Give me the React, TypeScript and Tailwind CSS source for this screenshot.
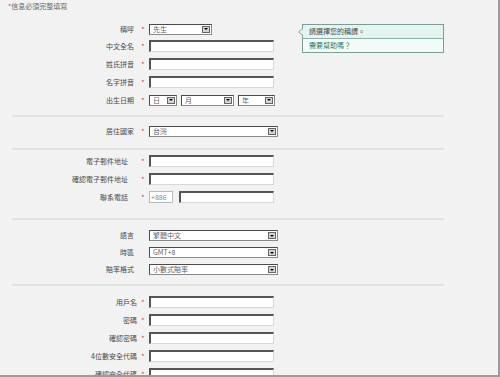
import React from 'react';

const font = { fontFamily: '"Noto Sans CJK TC", "Noto Sans", sans-serif' };

const Input: React.FC<{ w?: string }> = ({ w = 'w-[125px]' }) => (
  <div className={`${w} h-[12px] bg-white border-t-2 border-l-2 border-t-[#555] border-l-[#555] border-b border-r border-b-[#d8d8d8] border-r-[#d8d8d8]`} />
);

const Select: React.FC<{ value: string; w: string }> = ({ value, w }) => (
  <div className={`${w} h-[11px] bg-white border border-[#8a8a8a] border-t-[#4a4a4a] border-l-[#4a4a4a] flex items-center justify-between pl-[3px] pr-[1px]`}>
    <span className="text-[7px] leading-none text-[#666]">{value}</span>
    <div className="w-[8px] h-[7px] bg-[#d4d4d4] border border-[#666] flex items-center justify-center">
      <div className="w-0 h-0 border-l-[2px] border-r-[2px] border-t-[2px] border-l-transparent border-r-transparent border-t-black" />
    </div>
  </div>
);

const Row: React.FC<{ label: string; req?: boolean; h?: string; pr?: string; children: React.ReactNode }> = ({
  label,
  req = true,
  h = 'h-[18px]',
  pr = 'pr-[3px]',
  children,
}) => (
  <div className={`flex items-center ${h}`}>
    <div className={`w-[137px] ${pr} text-right text-[7px] leading-none text-[#4a4a4a] shrink-0 whitespace-nowrap`}>{label}</div>
    <div className="w-[12px] shrink-0 flex justify-center">
      {req && <span className="text-[7px] leading-none text-[#d03a3a]">*</span>}
    </div>
    {children}
  </div>
);

const Sep: React.FC<{ mt: string }> = ({ mt }) => <div className={`${mt} ml-[12px] w-[432px] h-[2px] bg-[#dfe3e1]`} />;

export default function App() {
  return (
    <div className="w-[500px] h-[377px] bg-[#f2f2f2] border-r-2 border-b-2 border-[#9c9c9c] overflow-hidden relative" style={font}>
      <div className="h-[21px] pl-[8px] pt-[3px] text-[7px] leading-none text-[#666]">
        <span className="text-[#d03a3a]">*</span>信息必須完整填寫
      </div>

      {/* 基本資料 */}
      <Row label="稱呼" h="h-[16px]">
        <Select value="先生" w="w-[63px]" />
      </Row>
      <Row label="中文全名">
        <Input />
      </Row>
      <Row label="姓氏拼音">
        <Input />
      </Row>
      <Row label="名字拼音">
        <Input />
      </Row>
      <Row label="出生日期">
        <div className="flex gap-[4px]">
          <Select value="日" w="w-[28px]" />
          <Select value="月" w="w-[53px]" />
          <Select value="年" w="w-[37px]" />
        </div>
      </Row>

      <Sep mt="mt-[6px]" />
      <div className="mt-[5px]">
        <Row label="居住國家">
          <Select value="台灣" w="w-[129px]" />
        </Row>
      </div>

      <Sep mt="mt-[8px]" />
      <div className="mt-[2px]">
        <Row label="電子郵件地址" pr="pr-[9px]">
          <Input />
        </Row>
        <Row label="確認電子郵件地址" pr="pr-[9px]">
          <Input />
        </Row>
        <Row label="聯系電話" pr="pr-[9px]">
          <div className="flex gap-[6px]">
            <div className="w-[24px] h-[12px] bg-white border border-[#bbb] text-[7px] leading-[10px] pl-[1px] text-[#888]">+886</div>
            <Input w="w-[95px]" />
          </div>
        </Row>
      </div>

      <Sep mt="mt-[12px]" />
      <div className="mt-[7px]">
        <Row label="語言" req={false} h="h-[17px]">
          <Select value="繁體中文" w="w-[129px]" />
        </Row>
        <Row label="時區" req={false} h="h-[17px]">
          <Select value="GMT+8" w="w-[129px]" />
        </Row>
        <Row label="賠率格式" req={false} h="h-[17px]">
          <Select value="小數式賠率" w="w-[129px]" />
        </Row>
      </div>

      <Sep mt="mt-[6px]" />
      <div className="mt-[7px]">
        <Row label="用戶名" pr="pr-0">
          <Input />
        </Row>
        <Row label="密碼" pr="pr-0">
          <Input />
        </Row>
        <Row label="確認密碼" pr="pr-0">
          <Input />
        </Row>
        <Row label="4位數安全代碼" pr="pr-0">
          <Input />
        </Row>
        <Row label="確認安全代碼" pr="pr-0">
          <Input />
        </Row>
      </div>

      {/* 提示框 */}
      <div className="absolute left-[302px] top-[24px] w-[142px] border border-[#7d9c97] text-[7px] leading-none">
        <div className="absolute -left-[5px] top-[3px] w-0 h-0 border-t-[4px] border-b-[4px] border-r-[5px] border-t-transparent border-b-transparent border-r-[#7d9c97]" />
        <div className="absolute -left-[4px] top-[4px] w-0 h-0 border-t-[3px] border-b-[3px] border-r-[4px] border-t-transparent border-b-transparent border-r-[#e4f4f0]" />
        <div className="h-[14px] bg-[#e4f4f0] border-b border-[#8fb0aa] flex items-center pl-[6px] text-[#444]">請選擇您的稱謂。</div>
        <div className="h-[13px] bg-[#f3fbf9] flex items-center pl-[6px] text-[#1f7a68]">需要幫助嗎？</div>
      </div>
    </div>
  );
}
